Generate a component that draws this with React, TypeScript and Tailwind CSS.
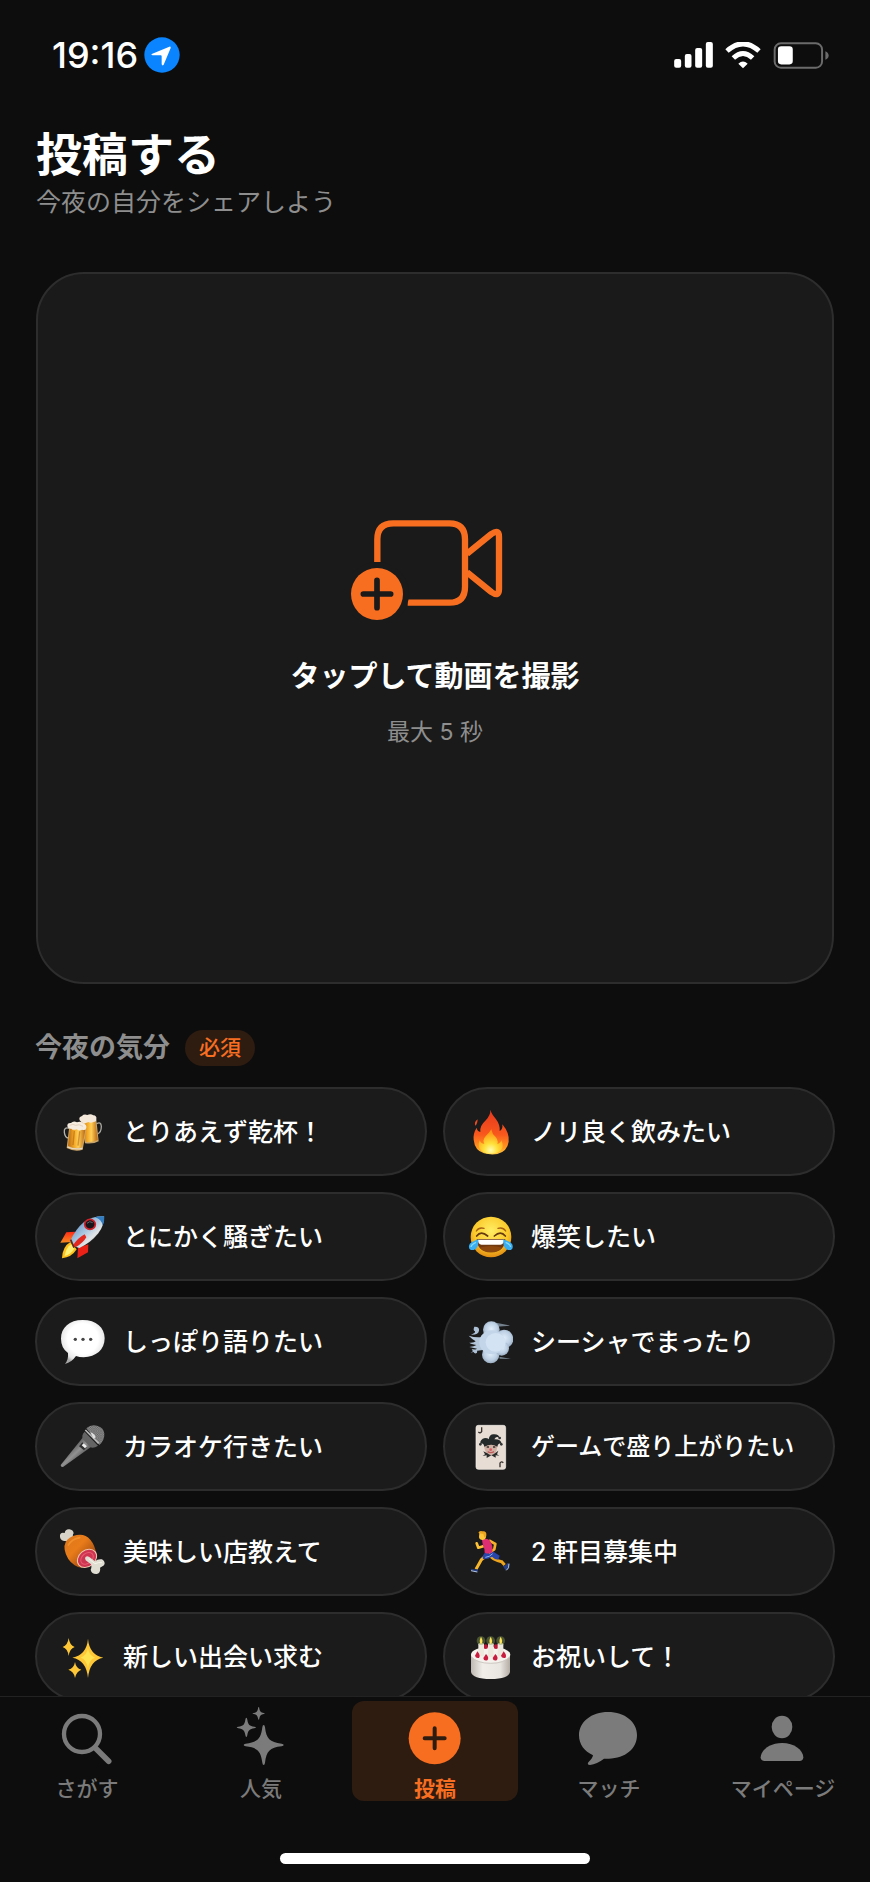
import React from 'react';

interface Mood {
  label: string;
  icon: React.ReactNode;
  small?: boolean;
}

interface Tab {
  label: string;
  icon: React.ReactNode;
  active?: boolean;
}

const Emoji: React.FC<{ children: React.ReactNode }> = ({ children }) => (
  <svg viewBox="0 0 138 138" className="size-[46px] shrink-0" fill="none" aria-hidden="true">
    {children}
  </svg>
);

const Beer = () => (
  <Emoji>
    <defs>
      <linearGradient id="beer" x1="0" x2="1">
        <stop offset="0" stopColor="#b8690f" />
        <stop offset=".35" stopColor="#f3a826" />
        <stop offset=".6" stopColor="#ffcf58" />
        <stop offset="1" stopColor="#b9650f" />
      </linearGradient>
    </defs>
    <path d="M112 45 Q126 36 127 52 Q127 70 116 75" stroke="#a8a6a0" strokeWidth="4" />
    <path d="M65 34 L112 32 L119 97 Q104 106 78 103Z" fill="#c9a56a" />
    <path d="M68 36 L109 35 L116 93 Q101 101 80 98Z" fill="url(#beer)" />
    <path d="M62 34 Q58 24 69 21 Q75 14 85 18 Q95 13 103 19 Q114 20 112 31 Q112 39 103 39 Q95 44 88 39 L74 45Z" fill="#f3e8da" />
    <path d="M31 58 Q14 53 16 70 Q18 86 28 87" stroke="#b4b2ab" strokeWidth="4" />
    <path d="M31 52 L82 60 L71 122 Q48 130 23 117Z" fill="#cfa768" />
    <path d="M33 57 L79 63 L69 115 Q46 121 27 110Z" fill="url(#beer)" />
    <path d="M25 114 Q47 123 70 118" stroke="#e9dcc4" strokeWidth="4" />
    <path d="M46 66 L42 108 M62 67 L57 110" stroke="#a9590c" strokeWidth="4" opacity=".5" />
    <path d="M25 52 Q24 41 36 42 Q43 34 54 40 Q65 36 72 43 Q84 46 82 57 Q80 66 69 62 Q60 67 53 61 Q42 65 37 59 Q27 61 25 52Z" fill="#f6ece0" />
    <path d="M32 49 Q42 43 50 49 Q60 44 72 52" stroke="#d8c2aa" strokeWidth="2" />
  </Emoji>
);

const Fire = () => (
  <Emoji>
    <defs>
      <linearGradient id="flame" x1="0" y1="0" x2="0" y2="1">
        <stop offset="0" stopColor="#e5371d" />
        <stop offset=".55" stopColor="#f8571d" />
        <stop offset=".85" stopColor="#ff9820" />
        <stop offset="1" stopColor="#ffc845" />
      </linearGradient>
      <radialGradient id="core" cx=".5" cy=".85" r=".7">
        <stop offset="0" stopColor="#fffbb0" />
        <stop offset=".4" stopColor="#ffe03a" />
        <stop offset="1" stopColor="#ff9a18" />
      </radialGradient>
    </defs>
    <path d="M70 2 Q73 14 86 29 Q100 47 98 66 Q108 61 106 46 Q128 72 125 98 Q121 127 91 135 Q71 138 51 133 Q23 124 20 92 Q18 73 29 56 Q31 67 40 69 Q37 51 55 35 Q71 19 70 2Z" fill="url(#flame)" />
    <path d="M32 31 Q20 40 25 50 Q31 46 32 31Z" fill="#e94b25" />
    <path d="M73 61 Q75 75 86 84 Q95 94 91 105 Q100 104 103 94 Q114 116 96 128 Q71 141 47 128 Q29 116 38 94 Q42 105 52 104 Q45 92 57 80 Q68 71 73 61Z" fill="url(#core)" />
  </Emoji>
);

const Rocket = () => (
  <Emoji>
    <defs>
      <linearGradient id="hull" x1="0" y1="0" x2="1" y2="1">
        <stop offset="0" stopColor="#3f78b5" />
        <stop offset=".45" stopColor="#a7c5df" />
        <stop offset=".65" stopColor="#e3e6e6" />
        <stop offset="1" stopColor="#6b6f78" />
      </linearGradient>
      <linearGradient id="fin" x1="0" y1="0" x2="0" y2="1">
        <stop offset="0" stopColor="#ff2a18" />
        <stop offset="1" stopColor="#f78a1d" />
      </linearGradient>
    </defs>
    <path d="M49 53 L22 55 L4 86 L39 84Z" fill="url(#fin)" />
    <path d="M88 91 L87 115 L55 133 L57 101Z" fill="#e92117" />
    <path d="M34 84 Q10 98 9 133 Q38 130 53 106Z" fill="#ffc21c" />
    <path d="M36 91 Q21 101 17 126 Q36 121 46 104Z" fill="#fff276" />
    <path d="M135 7 Q100 6 75 24 Q51 44 35 78 Q40 98 61 102 Q95 87 118 58 Q136 35 135 7Z" fill="url(#hull)" />
    <path d="M136 7 Q119 6 108 10 Q128 16 131 35 Q137 23 136 7Z" fill="#327cc0" />
    <path d="M77 61 Q57 71 41 95 L50 100 Q73 86 82 70Z" fill="#e2281f" />
    <path d="M35 77 L45 101" stroke="#5f2b24" strokeWidth="5" />
    <ellipse cx="93" cy="31" rx="16" ry="15" fill="#17151a" stroke="#cf2229" strokeWidth="5" />
    <path d="M84 28 Q92 19 101 26" stroke="#68636c" strokeWidth="3" />
  </Emoji>
);

const Joy = () => (
  <Emoji>
    <defs>
      <radialGradient id="face" cx=".5" cy=".35" r=".65">
        <stop offset="0" stopColor="#ffee65" />
        <stop offset=".65" stopColor="#fbc929" />
        <stop offset="1" stopColor="#e28b11" />
      </radialGradient>
    </defs>
    <circle cx="72" cy="69" r="61" fill="url(#face)" />
    <path d="M28 51 Q36 39 51 43 M93 43 Q108 39 116 51" stroke="#a86112" strokeWidth="4" strokeLinecap="round" />
    <path d="M29 66 Q42 49 62 66 M82 66 Q101 49 115 66" stroke="#673910" strokeWidth="5" strokeLinecap="round" />
    <path d="M29 75 H115 Q113 114 72 115 Q31 114 29 75Z" fill="#70380f" />
    <path d="M32 77 H112 Q110 91 101 92 H43 Q34 91 32 77Z" fill="#fff" />
    <path d="M38 101 Q72 91 106 101 Q94 115 72 115 Q50 115 38 101Z" fill="#8c470f" />
    <path d="M34 76 Q36 103 20 108 Q4 110 6 95 Q8 84 34 76Z M109 76 Q107 103 123 108 Q139 110 137 95 Q135 84 109 76Z" fill="#39aef0" />
    <path d="M27 85 Q13 91 12 99 M116 85 Q130 91 131 99" stroke="#8adcfb" strokeWidth="4" />
  </Emoji>
);

const Talk = () => (
  <Emoji>
    <defs>
      <radialGradient id="talk" cx=".5" cy=".43" r=".58">
        <stop offset=".6" stopColor="#fff" />
        <stop offset=".86" stopColor="#e8e8e8" />
        <stop offset="1" stopColor="#a8a8a8" />
      </radialGradient>
    </defs>
    <path d="M71 3 C112 3 137 26 137 58 C137 92 111 114 74 115 Q61 115 51 111 Q38 130 18 135 Q29 121 27 102 Q6 87 6 59 C6 26 31 3 71 3Z" fill="url(#talk)" />
    <g fill="#444">
      <circle cx="49" cy="61" r="5" />
      <circle cx="72" cy="61" r="5" />
      <circle cx="95" cy="61" r="5" />
    </g>
  </Emoji>
);

const Smoke = () => (
  <Emoji>
    <defs>
      <radialGradient id="puff" cx=".5" cy=".45" r=".6">
        <stop offset="0" stopColor="#e2eefa" />
        <stop offset=".6" stopColor="#bdd0e4" />
        <stop offset="1" stopColor="#8fa2b6" />
      </radialGradient>
    </defs>
    <path d="M87 11 L130 20 L89 23Z M98 119 L132 120 L97 113Z" fill="#74818c" />
    <path d="M5 50 Q26 57 45 54 L54 92 Q29 94 11 101 Q22 93 30 89 Q17 86 7 84 Q22 83 28 78 Q12 75 7 71 Q22 72 26 67 Q15 60 5 50Z" fill="#b4c6d9" />
    <circle cx="73" cy="32" r="25" fill="url(#puff)" />
    <circle cx="111" cy="60" r="28" fill="url(#puff)" />
    <circle cx="71" cy="107" r="26" fill="url(#puff)" />
    <circle cx="104" cy="88" r="22" fill="url(#puff)" />
    <ellipse cx="75" cy="70" rx="38" ry="36" fill="#c3d6e9" />
    <ellipse cx="86" cy="70" rx="30" ry="28" fill="#d3e3f3" />
    <path d="M22 23 Q38 22 36 35 Q34 48 12 47 Q26 43 24 37 Q17 34 22 23Z M14 91 Q34 90 30 101 Q23 107 18 97Z" fill="#adc1d6" />
  </Emoji>
);

const Mic = () => (
  <Emoji>
    <defs>
      <linearGradient id="mic" x1="0" y1="0" x2="1" y2="1">
        <stop offset=".25" stopColor="#414141" />
        <stop offset=".5" stopColor="#929292" />
        <stop offset=".75" stopColor="#393939" />
      </linearGradient>
      <pattern id="mesh" width="7" height="7" patternUnits="userSpaceOnUse">
        <rect width="7" height="7" fill="#898989" />
        <path d="M0 0 L7 7 M7 0 L0 7" stroke="#4d4d4d" strokeWidth="1" />
      </pattern>
    </defs>
    <path d="M72 40 L5 123 Q5 130 12 129 L100 66Z" fill="url(#mic)" />
    <path d="M77 23 L117 65 Q103 75 93 69 L72 46 Q66 34 77 23Z" fill="#646464" />
    <path d="M82 13 Q96 0 114 5 Q134 10 136 29 Q137 48 121 63Z" fill="url(#mesh)" />
    <path d="M79 18 L119 58" stroke="#b9b9b9" strokeWidth="5" />
    <path d="M94 25 Q107 29 110 40 L104 44Z" fill="#e1e1e1" />
    <path d="M70 55 L84 68 L75 79 L60 67Z" fill="#303030" />
    <path d="M74 58 L84 67 L78 73 L68 64Z" fill="#efefef" />
  </Emoji>
);

const Joker = () => (
  <Emoji>
    <rect x="27" y="4" width="89" height="132" rx="7" fill="#e7ddd4" stroke="#f8f4ef" strokeWidth="2" />
    <path d="M44 10 V23 Q40 29 34 24 M99 130 V117 Q103 111 109 116" stroke="#39332f" strokeWidth="4" />
    <path d="M51 62 L91 62 Q91 83 81 91 Q71 97 61 90 Q52 81 51 62Z" fill="#d0b2a5" />
    <path d="M40 60 Q38 46 54 42 Q63 42 65 46 Q68 29 82 31 Q97 31 97 43 Q89 34 82 46 Q103 45 104 60 Q94 54 91 68 Q73 57 52 68 Q49 54 40 60Z" fill="#242a29" />
    <circle cx="40" cy="61" r="4" fill="#303434" />
    <circle cx="98" cy="42" r="4" fill="#303434" />
    <circle cx="103" cy="61" r="4" fill="#303434" />
    <path d="M59 69 h7 M78 69 h7" stroke="#343231" strokeWidth="4" />
    <circle cx="71" cy="77" r="4" fill="#db5b63" />
    <path d="M62 83 Q71 89 81 83" stroke="#bf5a5c" strokeWidth="4" />
    <path d="M49 82 L61 88 Q72 99 84 88 L94 80 L90 91 L97 95 L86 94 L86 101 L73 94 L59 102 L59 94 L47 96 L54 91Z" fill="#292b2b" />
  </Emoji>
);

const Meat = () => (
  <Emoji>
    <defs>
      <linearGradient id="meat" x1="0" y1="0" x2="1" y2="1">
        <stop offset="0" stopColor="#d9761b" />
        <stop offset=".4" stopColor="#e97c1a" />
        <stop offset="1" stopColor="#7b310b" />
      </linearGradient>
    </defs>
    <path d="M3 19 Q4 9 17 12 Q19 0 31 1 Q43 3 44 13 Q39 18 44 27 L30 40 Q22 35 15 36 Q1 33 3 19Z" fill="#d8d4c9" />
    <path d="M20 40 Q28 23 53 18 Q78 13 94 32 Q107 47 112 74 Q108 95 88 108 Q68 124 47 109 Q22 91 17 62 Q15 49 20 40Z" fill="url(#meat)" />
    <path d="M28 48 Q39 30 62 26" stroke="#f99a35" strokeWidth="5" strokeLinecap="round" opacity=".7" />
    <ellipse cx="84" cy="88" rx="33" ry="26" transform="rotate(-40 84 88)" fill="#f0c6b0" />
    <ellipse cx="84" cy="88" rx="30" ry="23" transform="rotate(-40 84 88)" fill="#cf3550" />
    <ellipse cx="84" cy="88" rx="21" ry="15" transform="rotate(-40 84 88)" stroke="#e55b70" strokeWidth="3" />
    <path d="M78 87 Q81 79 91 84 L108 97 Q116 89 129 91 Q141 98 135 109 Q127 115 123 116 Q126 131 113 135 Q98 136 95 122 Q99 115 96 106 L80 94Z" fill="#e0ddd3" />
    <path d="M89 89 L108 104 Q120 99 129 101" stroke="#f7f4ec" strokeWidth="3" />
  </Emoji>
);

const Runner = () => (
  <Emoji>
    <path d="M61 72 Q74 92 104 98 L113 108" stroke="#eda51f" strokeWidth="9" />
    <path d="M62 74 Q57 82 43 92 L27 121" stroke="#f7b62a" strokeWidth="9" />
    <path d="M49 78 Q44 90 51 91 Q67 90 75 83 Q82 91 94 92 L98 80 L76 66 L55 69Z" fill="#2945a9" />
    <path d="M55 85 Q68 84 77 74" stroke="#8ab0ec" strokeWidth="3" />
    <path d="M66 34 L85 45 L82 61 L65 71" stroke="#f4b129" strokeWidth="8" strokeLinejoin="round" />
    <path d="M51 51 L34 56 L29 43" stroke="#ffc136" strokeWidth="8" strokeLinejoin="round" strokeLinecap="round" />
    <path d="M45 33 Q58 25 68 34 Q79 50 76 69 Q67 77 53 71 Q54 59 48 50Z" fill="#dc2e72" />
    <path d="M37 12 Q50 4 57 15 Q60 30 48 33 Q38 34 36 25Z" fill="#ffc638" />
    <path d="M34 12 Q37 4 46 7 Q59 5 58 18 Q57 26 52 25 L49 15Z" fill="#eaa620" />
    <path d="M13 119 Q20 123 31 120 L34 128 L12 124Z M108 112 Q117 111 121 102 L126 104 Q126 121 116 124Z" fill="#263f85" />
    <path d="M12 125 L31 129 M126 104 Q127 119 118 124" stroke="#b8cdec" strokeWidth="3" />
  </Emoji>
);

const Sparkle = () => (
  <Emoji>
    <g fill="#fdc738">
      <path d="M87 14 Q91 62 133 71 Q92 78 87 132 Q82 78 40 71 Q83 62 87 14Z" />
      <path d="M29 12 Q32 34 47 39 Q32 44 29 66 Q26 44 11 39 Q26 34 29 12Z" />
      <path d="M48 84 Q51 103 67 107 Q52 112 48 132 Q45 112 28 107 Q45 103 48 84Z" />
    </g>
    <path d="M87 42 Q89 64 108 71 Q89 76 87 105 Q84 76 65 71 Q84 64 87 42Z" fill="#ffe250" />
  </Emoji>
);

const Cake = () => (
  <Emoji>
    <defs>
      <linearGradient id="cake" x1="0" x2="1">
        <stop offset="0" stopColor="#bfb9b2" />
        <stop offset=".3" stopColor="#f1eeea" />
        <stop offset=".75" stopColor="#e9e5e0" />
        <stop offset="1" stopColor="#b3aca4" />
      </linearGradient>
    </defs>
    <path d="M12 62 V114 Q17 135 71 135 Q125 135 129 114 V62Z" fill="url(#cake)" />
    <ellipse cx="71" cy="62" rx="59" ry="24" fill="#f5f2ed" />
    <path d="M13 68 Q30 88 71 88 Q112 88 128 68" stroke="#cfc9c3" strokeWidth="3" />
    <g fill="#b91836">
      <circle cx="56" cy="38" r="7" />
      <circle cx="87" cy="38" r="7" />
    </g>
    <g fill="#eee9df">
      <rect x="34" y="28" width="17" height="39" rx="3" />
      <rect x="63" y="28" width="17" height="41" rx="3" />
      <rect x="92" y="28" width="17" height="39" rx="3" />
    </g>
    <g fill="#86a154" opacity=".45">
      <circle cx="42" cy="20" r="13" />
      <circle cx="71" cy="20" r="13" />
      <circle cx="101" cy="20" r="13" />
    </g>
    <g fill="#ffe35a">
      <path d="M42 8 Q51 24 42 30 Q34 24 42 8Z" />
      <path d="M71 8 Q80 24 71 30 Q63 24 71 8Z" />
      <path d="M101 8 Q110 24 101 30 Q93 24 101 8Z" />
    </g>
    <g fill="#c91c3e">
      <path d="M31 52 Q42 64 36 72 Q26 74 24 65Z" />
      <path d="M57 60 Q68 71 61 79 Q50 82 49 72Z" />
      <path d="M85 60 Q96 71 89 79 Q78 82 77 72Z" />
      <path d="M110 52 Q121 64 115 72 Q104 74 102 65Z" />
    </g>
  </Emoji>
);

const moods: Mood[] = [
  { label: 'とりあえず乾杯！', icon: <Beer /> },
  { label: 'ノリ良く飲みたい', icon: <Fire /> },
  { label: 'とにかく騒ぎたい', icon: <Rocket /> },
  { label: '爆笑したい', icon: <Joy /> },
  { label: 'しっぽり語りたい', icon: <Talk /> },
  { label: 'シーシャでまったり', icon: <Smoke /> },
  { label: 'カラオケ行きたい', icon: <Mic /> },
  { label: 'ゲームで盛り上がりたい', icon: <Joker />, small: true },
  { label: '美味しい店教えて', icon: <Meat /> },
  { label: '2 軒目募集中', icon: <Runner /> },
  { label: '新しい出会い求む', icon: <Sparkle /> },
  { label: 'お祝いして！', icon: <Cake /> },
];

const TabIcon: React.FC<{ children: React.ReactNode }> = ({ children }) => (
  <svg viewBox="0 0 180 180" className="size-[60px]" fill="currentColor" aria-hidden="true">
    {children}
  </svg>
);

const tabs: Tab[] = [
  {
    label: 'さがす',
    icon: (
      <TabIcon>
        <circle cx="75" cy="87" r="54" fill="none" stroke="currentColor" strokeWidth="13" />
        <path d="M115 129 L155 169" stroke="currentColor" strokeWidth="17" strokeLinecap="round" />
      </TabIcon>
    ),
  },
  {
    label: '人気',
    icon: (
      <TabIcon>
        <path d="M98 60 Q101 60 102 67 C106 101 116 112 152 116 Q158 117 158 120 Q158 123 152 124 C116 128 106 139 102 173 Q101 180 98 180 Q95 180 94 173 C90 139 80 128 44 124 Q38 123 38 120 Q38 117 44 116 C80 112 90 101 94 67 Q95 60 98 60Z" />
        <path d="M46 38 Q48 38 49 44 C51 59 56 63 70 65 Q75 66 75 67 Q75 69 70 70 C56 72 51 77 49 90 Q48 96 46 96 Q44 96 43 90 C41 77 36 72 22 70 Q17 69 17 67 Q17 66 22 65 C36 63 41 59 43 44 Q44 38 46 38Z" />
        <path d="M83 6 Q85 6 85 11 C87 20 90 22 98 24 Q102 24 102 25 Q102 26 98 27 C90 28 87 31 85 40 Q85 44 83 44 Q81 44 81 40 C79 31 76 28 68 27 Q64 26 64 25 Q64 24 68 24 C76 22 79 20 81 11 Q81 6 83 6Z" />
      </TabIcon>
    ),
  },
  {
    label: '投稿',
    active: true,
    icon: (
      <TabIcon>
        <circle cx="89" cy="100" r="78" />
        <path d="M89 70 V130 M59 100 H119" stroke="#2e1c11" strokeWidth="12" strokeLinecap="round" />
      </TabIcon>
    ),
  },
  {
    label: 'マッチ',
    icon: (
      <TabIcon>
        <path d="M87 21 C138 21 174 51 174 90 C174 131 139 160 89 161 Q82 161 75 161 Q54 177 33 180 Q23 180 28 172 Q41 160 42 151 C16 139 0 118 0 91 C0 51 37 21 87 21Z" />
      </TabIcon>
    ),
  },
  {
    label: 'マイページ',
    icon: (
      <TabIcon>
        <ellipse cx="87" cy="66" rx="31" ry="34" />
        <path d="M35 168 Q23 168 23 157 C24 135 50 114 87 114 C124 114 150 135 151 157 Q151 168 139 168Z" />
      </TabIcon>
    ),
  },
];

const StatusBar = () => (
  <div className="flex h-[110px] items-center justify-between pl-[52px] pr-[41px]">
    <div className="flex items-center gap-[6px]">
      <span className="font-['Inter'] text-[36px] leading-[40px] font-medium">19:16</span>
      <svg viewBox="0 0 108 108" className="size-9" aria-hidden="true">
        <circle cx="54" cy="54" r="53" fill="#0a84ff" />
        <path d="M76 29 Q81 28 80 33 L59 83 Q55 88 53 82 V58 Q53 55 50 55 H26 Q19 53 25 50Z" fill="#fff" />
      </svg>
    </div>
    <div className="flex items-center gap-3">
      <svg viewBox="0 0 116 78" className="h-[26px] w-[39px]" fill="#fff" aria-hidden="true">
        <rect x="0" y="51" width="21" height="26" rx="6" />
        <rect x="32" y="36" width="20" height="41" rx="6" />
        <rect x="63" y="18" width="21" height="59" rx="6" />
        <rect x="95" y="0" width="21" height="77" rx="6" />
      </svg>
      <svg viewBox="0 0 108 81" className="h-[27px] w-9" fill="none" stroke="#fff" aria-hidden="true">
        <path d="M6 27 Q54 -16 102 27" strokeWidth="15" />
        <path d="M25 48 Q54 21 83 48" strokeWidth="15" />
        <path d="M40 65 Q54 52 68 65 L54 79Z" fill="#fff" stroke="none" />
      </svg>
      <svg viewBox="0 0 168 82" className="h-[27px] w-14" aria-hidden="true">
        <rect x="4" y="4" width="144" height="74" rx="19" fill="none" stroke="#6b6b6b" strokeWidth="6" />
        <rect x="14" y="13" width="45" height="55" rx="10" fill="#fff" />
        <path d="M158 28 Q168 32 168 41 Q168 50 158 54Z" fill="#6b6b6b" />
      </svg>
    </div>
  </div>
);

const VideoAddIcon = () => (
  <svg viewBox="0 -33 504 333" className="h-[111px] w-[168px]" fill="none" aria-hidden="true">
    <g stroke="#f76e21" strokeWidth="19" strokeLinejoin="round">
      <path d="M79 126 V58 Q79 10 127 10 H295 Q342 10 342 58 V200 Q342 248 295 248 H170" />
      <path d="M348 101 L421 42 Q444 26 444 50 V208 Q444 232 421 216 L348 157" />
    </g>
    <circle cx="78" cy="222" r="96" fill="#1a1a1a" />
    <circle cx="78" cy="222" r="78" fill="#f76e21" />
    <path d="M78 181 V263 M37 222 H119" stroke="#1a1a1a" strokeWidth="17" strokeLinecap="round" />
  </svg>
);

const MoodButton: React.FC<{ mood: Mood }> = ({ mood }) => (
  <button
    type="button"
    className="flex h-[89px] items-center gap-[18px] rounded-full border-2 border-[#2d2d2d] bg-[#1b1b1b] pl-[22px] text-left"
  >
    {mood.icon}
    <span className={`${mood.small ? 'text-[24px]' : 'text-[25px]'} leading-9 font-medium whitespace-nowrap`}>{mood.label}</span>
  </button>
);

const TabBar = () => (
  <nav className="shrink-0 border-t border-[#222] bg-[#0d0d0d] pt-1">
    <div className="grid grid-cols-5">
      {tabs.map((tab) => (
        <a
          key={tab.label}
          href="#"
          aria-current={tab.active ? 'page' : undefined}
          className={`mx-1 flex flex-col items-center gap-3 rounded-xl pt-1 ${
            tab.active ? 'bg-[#2e1c11] font-bold text-[#f76e21]' : 'font-medium text-[#7b7b7b]'
          }`}
        >
          {tab.icon}
          <span className="text-[21px] leading-6 whitespace-nowrap">{tab.label}</span>
        </a>
      ))}
    </div>
    <div className="mx-auto mt-[52px] mb-[18px] h-[11px] w-[310px] rounded-full bg-white" />
  </nav>
);

export default function App() {
  return (
    <div className="flex h-screen flex-col bg-[#0d0d0d] font-['Inter','Noto_Sans_CJK_JP',sans-serif] text-white" lang="ja">
      <main className="min-h-0 flex-1 overflow-y-auto [scrollbar-width:none]">
        <StatusBar />
        <header className="px-9 pt-4">
          <h1 className="text-[46px] leading-[56px] font-bold">投稿する</h1>
          <p className="mt-[5px] text-[25px] leading-[30px] text-[#8e8e8e]">今夜の自分をシェアしよう</p>
        </header>

        <div className="mt-[55px] px-9">
          <button
            type="button"
            className="flex h-[712px] w-full flex-col items-center justify-center rounded-[48px] border-2 border-[#2d2d2d] bg-[#1a1a1a]"
          >
            <VideoAddIcon />
            <span className="mt-9 text-[29px] leading-[42px] font-bold">タップして動画を撮影</span>
            <span className="mt-[18px] text-[23px] leading-8 text-[#8e8e8e]">最大 5 秒</span>
          </button>
        </div>

        <section className="mt-[45px] px-[35px] pb-8">
          <div className="flex items-center gap-[15px]">
            <h2 className="text-[27px] leading-[38px] font-bold text-[#8e8e8e]">今夜の気分</h2>
            <span className="rounded-full bg-[#2e1c11] px-[14px] text-[21px] leading-9 font-medium text-[#f76e21]">必須</span>
          </div>
          <div className="mt-5 grid grid-cols-2 gap-4">
            {moods.map((mood) => (
              <MoodButton key={mood.label} mood={mood} />
            ))}
          </div>
        </section>
      </main>
      <TabBar />
    </div>
  );
}
